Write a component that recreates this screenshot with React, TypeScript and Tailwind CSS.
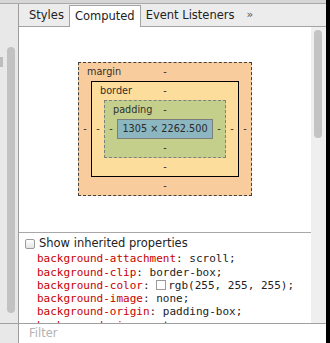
import React from 'react';

const UI = { fontFamily: '"DejaVu Sans", Verdana, sans-serif' };
const MONO = { fontFamily: '"DejaVu Sans Mono", Menlo, monospace' };

const PROPS: [string, string, boolean?][] = [
  ['background-attachment', 'scroll;'],
  ['background-clip', 'border-box;'],
  ['background-color', 'rgb(255, 255, 255);', true],
  ['background-image', 'none;'],
  ['background-origin', 'padding-box;'],
  ['background-size', 'auto;'],
];

const Dash = ({ className = '' }: { className?: string }) => (
  <span className={`w-[12px] shrink-0 text-center ${className}`}>-</span>
);

const BoxModel: React.FC = () => {
  return (
    <div className="flex justify-center pt-[35px] text-[9.7px] text-[#303030]" style={UI}>
      {/* margin */}
      <div className="w-[174px] border border-dashed border-[#404040] bg-[#f9cc9d] flex flex-col">
        <div className="relative h-[18px] flex items-center justify-center">
          <span className="absolute left-[8px]">margin</span>
          <span>-</span>
        </div>
        <div className="flex items-center">
          <Dash />
          {/* border */}
          <div className="w-[148px] border border-black bg-[#fddd9b] flex flex-col">
            <div className="relative h-[18px] flex items-center justify-center">
              <span className="absolute left-[8px]">border</span>
              <span>-</span>
            </div>
            <div className="flex items-center">
              <Dash />
              {/* padding */}
              <div className="w-[122px] border border-dashed border-[#808080] bg-[#c4cf8b] flex flex-col">
                <div className="relative h-[18px] flex items-center justify-center">
                  <span className="absolute left-[8px]">padding</span>
                  <span>-</span>
                </div>
                <div className="flex items-center">
                  <Dash />
                  <div className="w-[96px] h-[20px] border border-[#7d7d7d] bg-[#8cb6c0] flex items-center justify-center text-[#2a2a2a]">
                    1305 × 2262.500
                  </div>
                  <Dash />
                </div>
                <div className="h-[18px] flex items-center justify-center">-</div>
              </div>
              <Dash />
            </div>
            <div className="h-[18px] flex items-center justify-center">-</div>
          </div>
          <Dash />
        </div>
        <div className="h-[18px] flex items-center justify-center">-</div>
      </div>
    </div>
  );
};

export default function App() {
  return (
    <div className="w-[330px] h-[343px] flex bg-white overflow-hidden">
      <div className="w-[326px] h-full flex flex-col">
        {/* strip from the panel above */}
        <div className="h-[4px] bg-[#d6d6d6] border-b border-[#a9a9a9]" />
        <div className="flex-1 flex min-h-0">
          {/* left gutter with scrollbar */}
          <div className="w-[19px] shrink-0 bg-[#e8e8e8] border-r border-[#9c9c9c] flex flex-col">
            <div className="relative flex-1">
              <div className="absolute left-0 top-[53px] w-[3px] h-[10px] bg-[#bdbdbd]" />
              <div className="absolute left-[7px] top-[43px] w-[8px] h-[266px] rounded-full bg-[#c2c2c2]" />
            </div>
            <div className="h-[20px] border-t border-[#a0a0a0]" />
          </div>

          <div className="flex-1 flex flex-col min-w-0">
            {/* tabs */}
            <div className="h-[23px] shrink-0 bg-[#ececec] border-b border-[#a3a3a3] flex items-end pl-[5px] text-[11.5px] text-[#222]" style={UI}>
              <div className="px-[5px] h-[21px] flex items-center">Styles</div>
              <div className="px-[5px] h-[22px] -mb-px flex items-center bg-white border border-b-0 border-[#a3a3a3]">Computed</div>
              <div className="px-[5px] h-[21px] flex items-center">Event Listeners</div>
              <div className="pl-[7px] h-[21px] flex items-center text-[11px] text-[#555]">»</div>
            </div>

            <div className="flex-1 flex min-h-0">
              <div className="flex-1 flex flex-col min-w-0 overflow-hidden">
                <div className="h-[206px] shrink-0 border-b border-[#a8a8a8]">
                  <BoxModel />
                </div>
                <div className="flex items-center h-[20px] pl-[6px] pt-[2px] text-[11.5px] text-[#222]" style={UI}>
                  <span className="w-[10px] h-[10px] rounded-[2px] border border-[#9a9a9a] bg-gradient-to-b from-white to-[#e4e4e4] mr-[4px]" />
                  Show inherited properties
                </div>
                <div className="pl-[18px] text-[11px] leading-[13.3px] whitespace-nowrap" style={MONO}>
                  {PROPS.map(([k, v, sw]) => (
                    <div key={k} className="flex items-center">
                      <span className="text-[#c80000]">{k}</span>
                      <span className="text-[#222]">:&nbsp;</span>
                      {sw && <span className="w-[10px] h-[10px] border border-[#9a9a9a] bg-white mr-[2px]" />}
                      <span className="text-[#222]">{v}</span>
                    </div>
                  ))}
                </div>
              </div>
              {/* right scrollbar */}
              <div className="w-[15px] shrink-0 bg-[#efefef] relative">
                <div className="absolute left-[3px] top-[3px] w-[8px] h-[108px] rounded-full bg-[#c4c4c4]" />
              </div>
            </div>

            {/* filter */}
            <div className="h-[20px] shrink-0 border-t border-[#a0a0a0] flex items-center pl-[10px] text-[11.5px] text-[#b3b3b3]" style={UI}>
              Filter
            </div>
          </div>
        </div>
      </div>
      <div className="w-[4px] h-full bg-black" />
    </div>
  );
}
